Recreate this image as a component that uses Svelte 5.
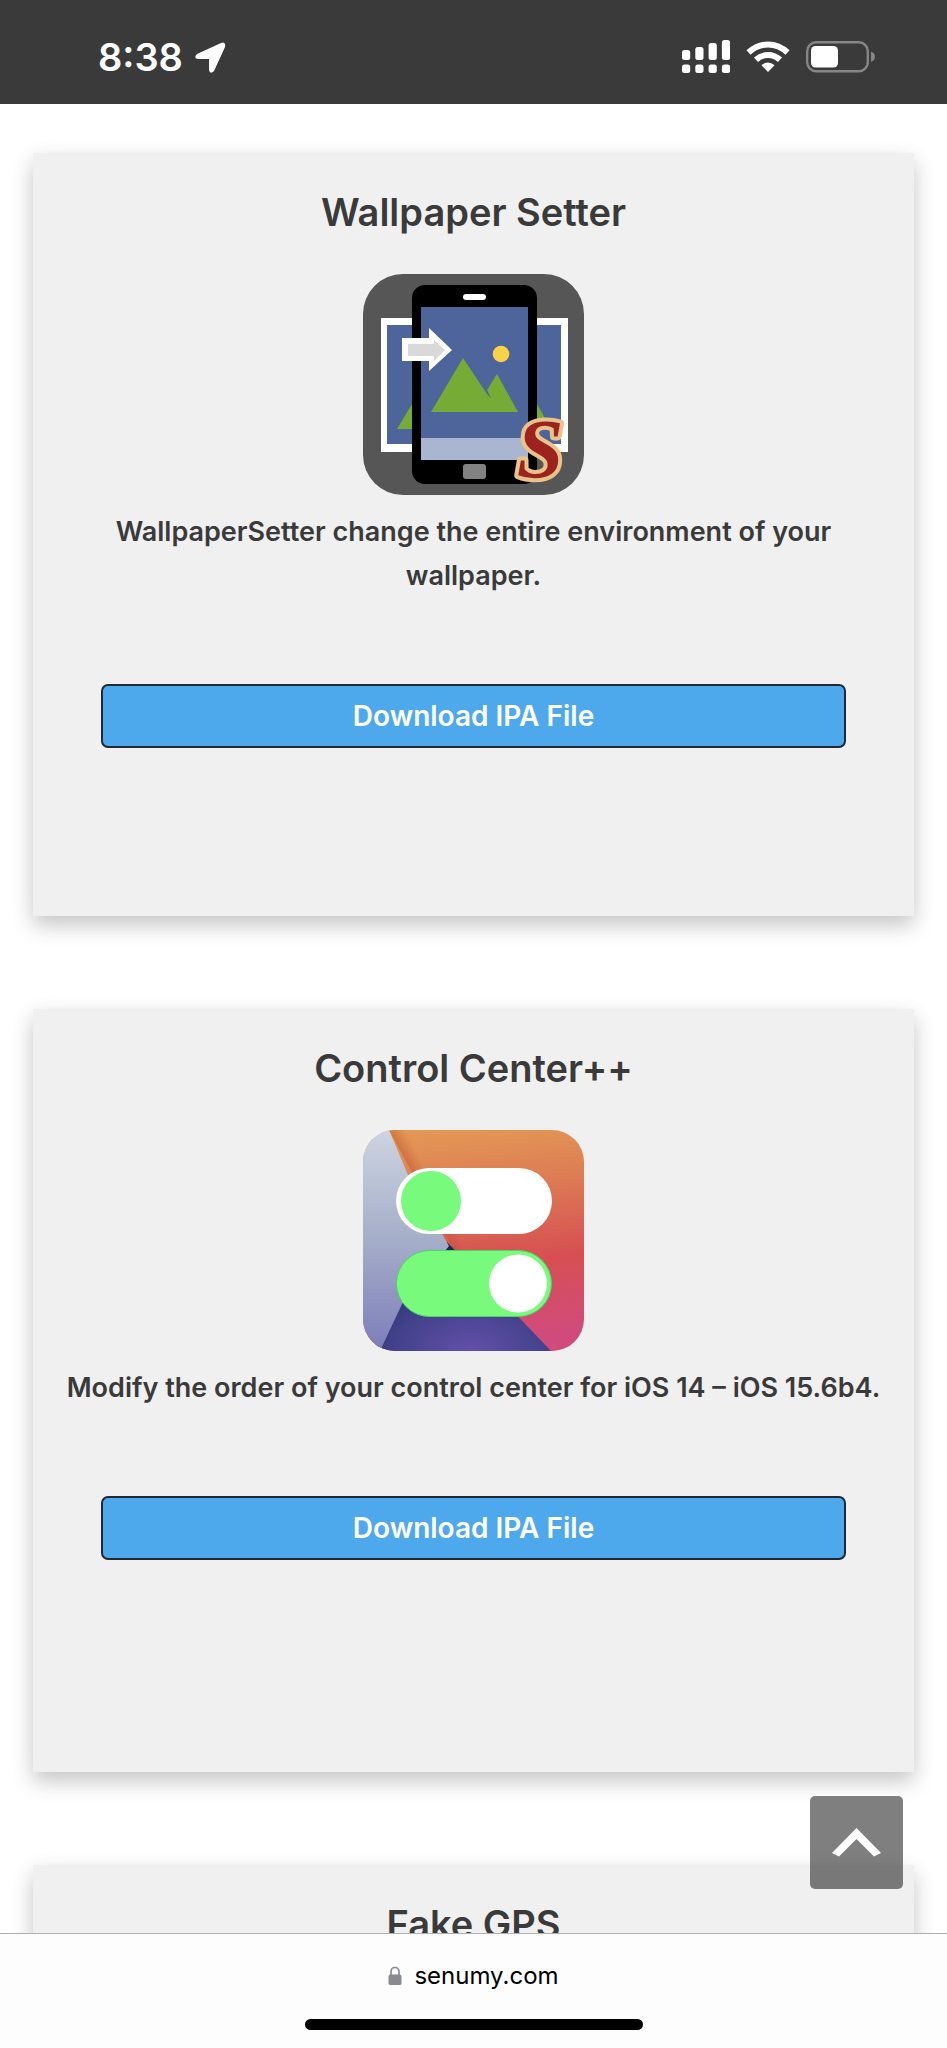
<!--
  Tweak catalogue as seen in the phone browser: status bar, scrolling app cards, address bar.
-->
<script lang="ts">
	interface App {
		name: string;
		icon: 'wallpaper' | 'toggles' | 'none';
		description: string;
	}

	const apps: App[] = [
		{
			name: 'Wallpaper Setter',
			icon: 'wallpaper',
			description: 'WallpaperSetter change the entire environment of your wallpaper.'
		},
		{
			name: 'Control Center++',
			icon: 'toggles',
			description: 'Modify the order of your control center for iOS 14 – iOS 15.6b4.'
		},
		{ name: 'Fake GPS', icon: 'none', description: '' }
	];

	const signalHeights = [10, 13, 17, 20];

	let list: HTMLElement;

	function scrollToTop() {
		list.scrollTo({ top: 0, behavior: 'smooth' });
	}
</script>

<div class="screen">
	<header class="status-bar">
		<div class="status-group time-group">
			<span class="time">8:38</span>
			<svg width="31" height="31" viewBox="0 0 31 31" aria-hidden="true">
				<path d="M2 12 26 1Q31-1 30 5L19 29Q15 33 14 28V17H3Q-2 16 2 12Z" fill="#fff" />
			</svg>
		</div>
		<div class="status-group">
			<svg width="48" height="34" viewBox="0 0 48 34" fill="#fff" aria-hidden="true">
				{#each signalHeights as height, i (height)}
					<rect x={i * 13.3} y={20 - height} width="8.2" {height} rx="2.5" />
					<rect x={i * 13.3} y="24.5" width="8.2" height="8.5" rx="2.5" />
				{/each}
			</svg>
			<svg width="44" height="32" viewBox="0 0 44 32" aria-hidden="true">
				<g fill="none" stroke="#fff" stroke-width="6">
					<path d="M2.5 11.5Q11 3.4 22 3.4T41.5 11.5" />
					<path d="M10 18.8Q15.2 14 22 14T34 18.8" />
				</g>
				<path d="M15.4 24.2Q22 18.6 28.6 24.2L22 31Z" fill="#fff" />
			</svg>
			<svg width="70" height="32" viewBox="0 0 70 32" aria-hidden="true">
				<rect x="1.2" y="1.2" width="60.6" height="29" rx="9" fill="none" stroke="#868686" stroke-width="2.4" />
				<rect x="5" y="5" width="27" height="21.5" rx="4.5" fill="#fff" />
				<path d="M65 10.5Q69 12 69 15.8T65 21Z" fill="#868686" />
			</svg>
		</div>
	</header>

	<div class="viewport">
		<main class="list" bind:this={list}>
			{#each apps as app (app.name)}
				<article class="card">
					<h2>{app.name}</h2>
					{#if app.icon === 'wallpaper'}
						<svg class="app-icon" viewBox="0 0 221 221" role="img" aria-label="Wallpaper Setter icon">
							<rect width="221" height="221" rx="40" fill="#565656" />
							<rect x="18" y="44" width="187" height="134" fill="#fff" />
							<rect x="24" y="51" width="174" height="119" fill="#4d659b" />
							<path d="M34 155 49 130V155ZM174 130 188 155H174Z" fill="#76ab36" />
							<rect x="49" y="11" width="125" height="199" rx="13" fill="#000" />
							<rect x="100" y="20" width="23" height="6" rx="3" fill="#fff" />
							<rect x="58" y="33" width="107" height="153" fill="#4d659b" />
							<rect x="58" y="164" width="107" height="22" fill="#aab5d2" />
							<rect x="100" y="190" width="23" height="15" rx="3" fill="#828282" />
							<path d="M68 138 100 84 124 120 128 124 124 116 134 100 155 138Z" fill="#76ab36" />
							<circle cx="138" cy="80" r="8.3" fill="#fad247" />
							<path d="M39 64H66V54L89 76 66 97V87H39Z" fill="#fff" />
							<path d="M45 70H71V66L82 76 71 87V82H45Z" fill="#d9d9d9" />
							<text class="logo-letter" x="177" y="204" text-anchor="middle">S</text>
						</svg>
					{:else if app.icon === 'toggles'}
						<svg class="app-icon" viewBox="0 0 221 221" role="img" aria-label="Control Center++ icon">
							<defs>
								<clipPath id="tile"><rect width="221" height="221" rx="32" /></clipPath>
								<linearGradient id="warm" x1="0" y1="0" x2="0.1" y2="1">
									<stop offset="0" stop-color="#e59b55" />
									<stop offset="0.3" stop-color="#dc7c54" />
									<stop offset="0.65" stop-color="#d74f52" />
									<stop offset="1" stop-color="#d04b7c" />
								</linearGradient>
								<linearGradient id="cool" x1="0" y1="0" x2="0" y2="1">
									<stop offset="0" stop-color="#cdd4e2" />
									<stop offset="0.5" stop-color="#a5aec8" />
									<stop offset="1" stop-color="#7c7db9" />
								</linearGradient>
								<radialGradient id="deep" cx="0.55" cy="1" r="0.9">
									<stop offset="0" stop-color="#6350aa" />
									<stop offset="0.5" stop-color="#414189" />
									<stop offset="1" stop-color="#142857" />
								</radialGradient>
								<linearGradient id="fold" gradientUnits="userSpaceOnUse" x1="50" y1="60" x2="68" y2="51">
									<stop offset="0" stop-color="#b03c20" stop-opacity="0.5" />
									<stop offset="1" stop-color="#b03c20" stop-opacity="0" />
								</linearGradient>
							</defs>
							<g clip-path="url(#tile)">
								<rect width="221" height="221" fill="url(#warm)" />
								<path d="M26 0H70L130 160 91 120Z" fill="url(#fold)" />
								<path d="M84 112 30 160 10 221H188Z" fill="url(#deep)" />
								<path d="M0 0H26L45 45 86 116 39 174 17 221H0Z" fill="url(#cool)" />
							</g>
							<rect x="33" y="38" width="156" height="66" rx="33" fill="#fff" />
							<circle cx="68" cy="71" r="30" fill="#78fa7d" />
							<rect x="33.5" y="120.5" width="155" height="66" rx="33" fill="#78fa7d" stroke="#54cf68" />
							<circle cx="155" cy="153.5" r="29" fill="#fff" />
						</svg>
					{/if}
					{#if app.description}
						<p>{app.description}</p>
						<button class="download" type="button">Download IPA File</button>
					{/if}
				</article>
			{/each}
		</main>

		<button class="to-top" type="button" aria-label="Back to top" onclick={scrollToTop}>
			<svg width="49" height="29" viewBox="0 0 49 29" aria-hidden="true">
				<path d="M24.5 0 49 25 42 28.5 24.5 11 7 28.5 0 25Z" fill="#fff" />
			</svg>
		</button>
	</div>

	<footer class="address-bar">
		<a class="address" href="https://senumy.com">
			<svg width="14" height="20" viewBox="0 0 14 20" aria-hidden="true">
				<path d="M3 9V5.5a4 4 0 0 1 8 0V9" fill="none" stroke="#8a898e" stroke-width="1.7" />
				<rect x="0.5" y="8.5" width="13" height="10.5" rx="1.8" fill="#8a898e" />
			</svg>
			senumy.com
		</a>
		<div class="home-indicator"></div>
	</footer>
</div>

<style>
	:global(body) {
		background: #fff;
	}

	.screen {
		display: flex;
		flex-direction: column;
		height: 100vh;
		font-family: Inter, 'Liberation Sans', sans-serif;
		color: #3a3a3a;
	}

	.status-bar {
		display: flex;
		align-items: center;
		justify-content: space-between;
		flex-shrink: 0;
		box-sizing: border-box;
		height: 104px;
		padding: 10px 71px 0 98px;
		background: #3a3a3a;
		color: #fff;
	}

	.status-group {
		display: flex;
		align-items: center;
		gap: 16px;
	}

	.time-group {
		gap: 12px;
	}

	.time {
		font-size: 38px;
		font-weight: 600;
		line-height: 48px;
	}

	.viewport {
		position: relative;
		flex: 1;
		min-height: 0;
	}

	.list {
		display: flex;
		flex-direction: column;
		gap: 93px;
		box-sizing: border-box;
		height: 100%;
		padding: 49px 33px;
		overflow-y: auto;
		scrollbar-width: none;
	}

	.card {
		display: flex;
		flex-direction: column;
		align-items: center;
		flex-shrink: 0;
		box-sizing: border-box;
		min-height: 763px;
		padding: 35px 24px;
		background: #f0f0f0;
		box-shadow:
			0 10px 20px rgba(0, 0, 0, 0.19),
			0 4px 24px rgba(0, 0, 0, 0.05);
		text-align: center;
	}

	h2 {
		margin: 0 0 38px;
		font-size: 38px;
		font-weight: 600;
		line-height: 48px;
	}

	.app-icon {
		width: 221px;
		height: 221px;
	}

	.logo-letter {
		font-family: 'Liberation Serif', serif;
		font-size: 84px;
		font-style: italic;
		font-weight: 700;
		fill: #9c231e;
		stroke: #e8c48a;
		stroke-width: 8px;
		stroke-linejoin: round;
		paint-order: stroke;
	}

	p {
		margin: 15px 0 86px;
		font-size: 27px;
		font-weight: 600;
		line-height: 44px;
	}

	.download {
		align-self: stretch;
		height: 64px;
		margin: 0 44px;
		border: 2px solid #1f2a33;
		border-radius: 7px;
		background: #4da9eb;
		color: #fff;
		font-family: inherit;
		font-size: 28px;
		font-weight: 600;
	}

	.to-top {
		position: absolute;
		right: 44px;
		bottom: 44px;
		display: flex;
		align-items: center;
		justify-content: center;
		width: 93px;
		height: 93px;
		padding: 0;
		border: 0;
		border-radius: 5px;
		background: rgba(0, 0, 0, 0.5);
	}

	.address-bar {
		display: flex;
		flex-direction: column;
		align-items: center;
		justify-content: space-between;
		flex-shrink: 0;
		box-sizing: border-box;
		height: 115px;
		padding: 26px 0 18px;
		border-top: 1px solid #b0b0b0;
		background: #fdfdfd;
	}

	.address {
		display: flex;
		align-items: center;
		gap: 12px;
		color: #000;
		font-size: 24px;
		line-height: 32px;
		text-decoration: none;
	}

	.home-indicator {
		width: 338px;
		height: 11px;
		border-radius: 6px;
		background: #000;
	}
</style>
